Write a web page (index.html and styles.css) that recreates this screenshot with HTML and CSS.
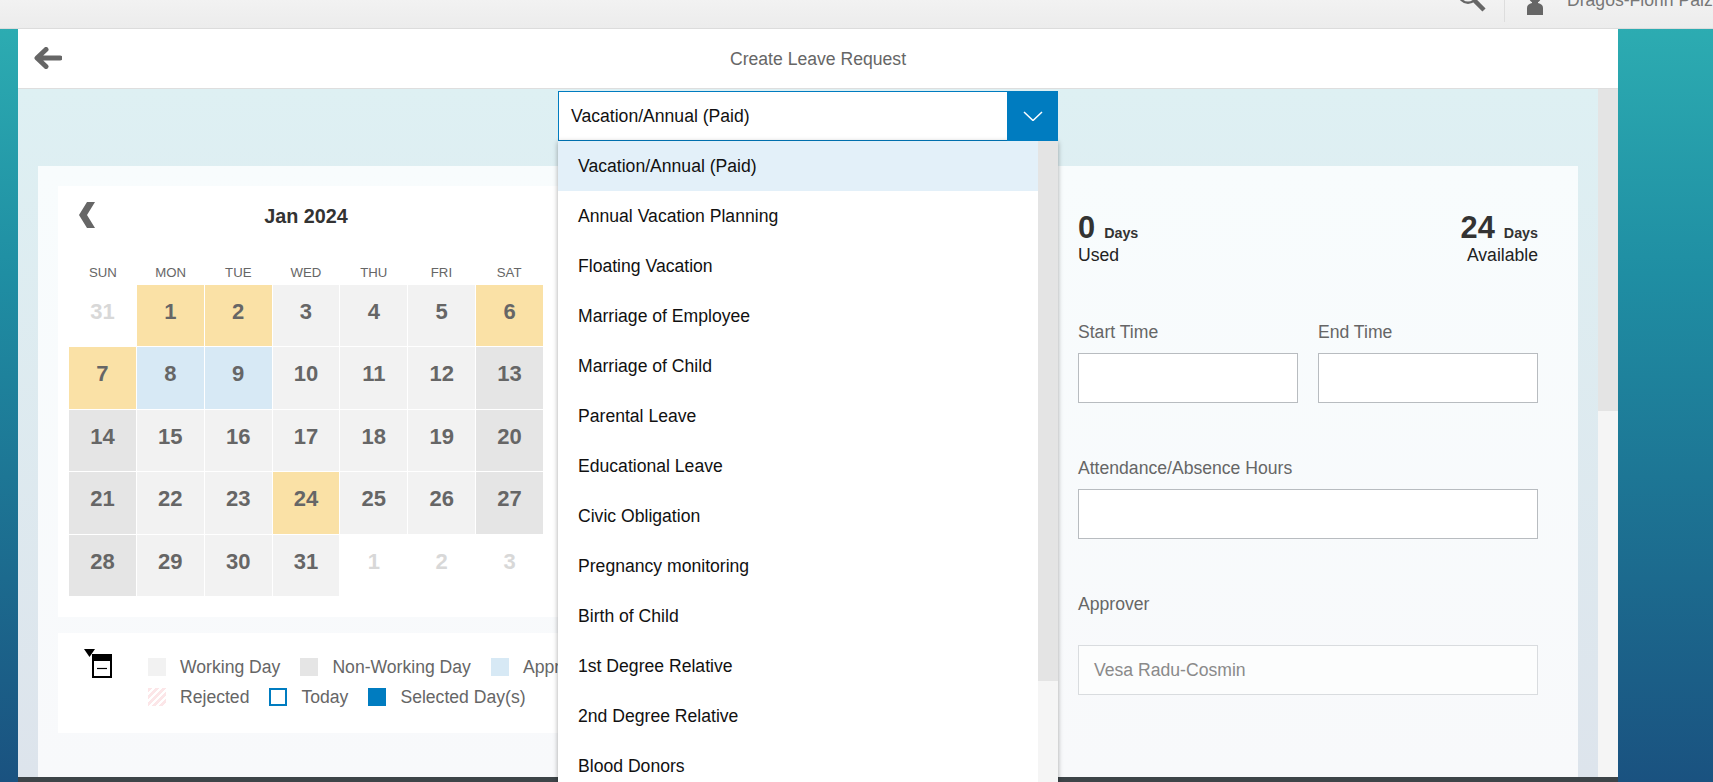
FILE: index.html
```html
<!DOCTYPE html>
<html lang="en">
<head>
    <meta charset="UTF-8">
    <meta name="viewport" content="width=device-width, initial-scale=1.0">
    <title>Create Leave Request</title>
    <link rel="stylesheet" href="styles.css">
</head>
<body>
    <div class="topbar">
        <svg class="search-icon" width="30" height="30" viewBox="0 0 30 30">
            <circle cx="10" cy="10" r="8.8" fill="none" stroke="#666" stroke-width="2.4"/>
            <path d="M16 16 L26 26" stroke="#666" stroke-width="4.5"/>
        </svg>
        <div class="topbar-divider"></div>
        <svg class="user-icon" width="16" height="24" viewBox="0 0 16 24">
            <circle cx="8" cy="6" r="6" fill="#666"/>
            <path d="M5 10 H11 L11 12 C14 13 16 14 16 17 V24 H0 V17 C0 14 2 13 5 12 Z" fill="#666"/>
        </svg>
        <div class="user-name">Dragos-Florin Paiza</div>
    </div>

    <div class="panel">
        <div class="panel-header">
            <svg class="back-icon" width="28" height="22" viewBox="0 0 28 22">
                <path d="M26 11 H4 M12 2.5 L3 11 L12 19.5" fill="none" stroke="#666" stroke-width="5" stroke-linecap="round" stroke-linejoin="round"/>
            </svg>
            <div class="panel-title">Create Leave Request</div>
        </div>

        <div class="panel-body">
            <div class="content">
                <div class="card">
                    <div class="left-col">
                        <div class="calendar">
                            <div class="calendar-head">
                                <svg class="prev-icon" width="17" height="26" viewBox="0 0 17 26">
                                    <path d="M8 0 H16 L8 13 L16 26 H8 L0 13 Z" fill="#666"/>
                                </svg>
                                <div class="month">Jan 2024</div>
                            </div>
                            <div class="weekdays">
                                <div>SUN</div><div>MON</div><div>TUE</div><div>WED</div><div>THU</div><div>FRI</div><div>SAT</div>
                            </div>
                            <div class="days">
                                <div class="day out">31</div>
                                <div class="day leave">1</div>
                                <div class="day leave">2</div>
                                <div class="day">3</div>
                                <div class="day">4</div>
                                <div class="day">5</div>
                                <div class="day leave">6</div>

                                <div class="day leave">7</div>
                                <div class="day approved">8</div>
                                <div class="day approved">9</div>
                                <div class="day">10</div>
                                <div class="day">11</div>
                                <div class="day">12</div>
                                <div class="day off">13</div>

                                <div class="day off">14</div>
                                <div class="day">15</div>
                                <div class="day">16</div>
                                <div class="day">17</div>
                                <div class="day">18</div>
                                <div class="day">19</div>
                                <div class="day off">20</div>

                                <div class="day off">21</div>
                                <div class="day">22</div>
                                <div class="day">23</div>
                                <div class="day leave">24</div>
                                <div class="day">25</div>
                                <div class="day">26</div>
                                <div class="day off">27</div>

                                <div class="day off">28</div>
                                <div class="day">29</div>
                                <div class="day">30</div>
                                <div class="day">31</div>
                                <div class="day out">1</div>
                                <div class="day out">2</div>
                                <div class="day out">3</div>
                            </div>
                        </div>

                        <div class="legend">
                            <svg class="legend-icon" width="30" height="32" viewBox="0 0 30 32">
                                <path d="M0 0 H11 L5.5 8 Z" fill="#000"/>
                                <rect x="9" y="6" width="18" height="22" fill="#fff" stroke="#000" stroke-width="2"/>
                                <rect x="8" y="5" width="20" height="7" fill="#000"/>
                                <path d="M13 19.5 H23" stroke="#000" stroke-width="1.2"/>
                            </svg>
                            <div class="legend-rows">
                                <div class="legend-row">
                                    <div class="legend-item"><span class="swatch working"></span>Working Day</div>
                                    <div class="legend-item"><span class="swatch non-working"></span>Non-Working Day</div>
                                    <div class="legend-item"><span class="swatch appr"></span>Approved</div>
                                </div>
                                <div class="legend-row">
                                    <div class="legend-item"><span class="swatch rejected"></span>Rejected</div>
                                    <div class="legend-item"><span class="swatch today"></span>Today</div>
                                    <div class="legend-item"><span class="swatch selected"></span>Selected Day(s)</div>
                                </div>
                            </div>
                        </div>
                    </div>

                    <div class="right-col">
                        <div class="stats">
                            <div class="stat">
                                <div><span class="stat-num">0</span><span class="stat-unit">Days</span></div>
                                <div class="stat-label">Used</div>
                            </div>
                            <div class="stat stat-right">
                                <div><span class="stat-num">24</span><span class="stat-unit">Days</span></div>
                                <div class="stat-label">Available</div>
                            </div>
                        </div>

                        <div class="time-row">
                            <div class="field">
                                <label class="field-label">Start Time</label>
                                <div class="field-input"></div>
                            </div>
                            <div class="field">
                                <label class="field-label">End Time</label>
                                <div class="field-input"></div>
                            </div>
                        </div>

                        <div class="field hours">
                            <label class="field-label">Attendance/Absence Hours</label>
                            <div class="field-input"></div>
                        </div>

                        <div class="field approver">
                            <label class="field-label">Approver</label>
                            <div class="field-input readonly">Vesa Radu-Cosmin</div>
                        </div>
                    </div>
                </div>
            </div>
            <div class="scrollbar"><div class="scroll-thumb"></div></div>

            <div class="dropdown">
                <div class="select">
                    <div class="select-value">Vacation/Annual (Paid)</div>
                    <div class="select-btn">
                        <svg width="20" height="10" viewBox="0 0 20 10">
                            <path d="M1 1 L10 9.5 L19 1" fill="none" stroke="#fff" stroke-width="1.5"/>
                        </svg>
                    </div>
                </div>
                <div class="options">
                    <div class="option-list">
                        <div class="option active">Vacation/Annual (Paid)</div>
                        <div class="option">Annual Vacation Planning</div>
                        <div class="option">Floating Vacation</div>
                        <div class="option">Marriage of Employee</div>
                        <div class="option">Marriage of Child</div>
                        <div class="option">Parental Leave</div>
                        <div class="option">Educational Leave</div>
                        <div class="option">Civic Obligation</div>
                        <div class="option">Pregnancy monitoring</div>
                        <div class="option">Birth of Child</div>
                        <div class="option">1st Degree Relative</div>
                        <div class="option">2nd Degree Relative</div>
                        <div class="option">Blood Donors</div>
                    </div>
                    <div class="options-scroll"><div class="options-thumb"></div></div>
                </div>
            </div>
        </div>
        <div class="panel-footer"></div>
    </div>
</body>
</html>
```

FILE: styles.css
```css
html, body {
    height: 100%;
}

body {
    margin: 0;
    height: 782px;
    overflow: hidden;
    font-family: "Liberation Sans", Arial, sans-serif;
    font-size: 17.6px;
    background: linear-gradient(to bottom, #2eafb3 0%, #1f8ea3 35%, #1a5280 100%);
}

.topbar {
    height: 28px;
    background: linear-gradient(to bottom, #f2f2f2, #ececec);
    border-bottom: 1px solid #dcdcdc;
    display: flex;
    align-items: flex-end;
    overflow: hidden;
    padding-left: 1458px;
}

.search-icon {
    flex: none;
    margin-bottom: 14px;
}

.topbar-divider {
    flex: none;
    width: 1px;
    height: 40px;
    background: #dddddd;
    margin-left: 16px;
    margin-bottom: 6px;
}

.user-icon {
    flex: none;
    margin-left: 22px;
    margin-bottom: 13px;
}

.user-name {
    flex: none;
    margin-left: 24px;
    margin-bottom: 17px;
    color: #777;
    white-space: nowrap;
}

.panel {
    margin-left: 18px;
    width: 1600px;
    height: 753px;
    display: flex;
    flex-direction: column;
}

.panel-header {
    height: 59px;
    flex: none;
    background: #fff;
    border-bottom: 1px solid #dedede;
    display: flex;
    align-items: center;
    justify-content: center;
    position: relative;
}

.back-icon {
    position: absolute;
    left: 16px;
    top: 18px;
}

.panel-title {
    color: #666;
    padding-top: 1px;
}

.panel-body {
    flex: 1;
    min-height: 0;
    display: flex;
    position: relative;
}

.content {
    flex: 1;
    padding: 77px 20px 0;
    background: linear-gradient(to bottom, #def0f3, #dde4ec);
}

.card {
    height: 100%;
    box-sizing: border-box;
    padding: 20px 40px 0 20px;
    background: linear-gradient(to bottom, #f8fcfd, #f8f9fb);
    display: flex;
    gap: 20px;
}

.scrollbar {
    width: 20px;
    flex: none;
    background: #f5f5f5;
}

.scroll-thumb {
    height: 322px;
    background: #e4e4e4;
}

.panel-footer {
    height: 5px;
    flex: none;
    background: #3d4448;
}

/* calendar */
.left-col {
    width: 1000px;
    flex: none;
}

.calendar {
    height: 431px;
    box-sizing: border-box;
    background: #fff;
    padding: 0 11px;
}

.calendar-head {
    width: 474px;
    height: 60px;
    display: flex;
    align-items: center;
    justify-content: center;
    position: relative;
}

.prev-icon {
    position: absolute;
    left: 10px;
    top: 16px;
}

.month {
    font-size: 19.8px;
    font-weight: bold;
    color: #333;
}

.weekdays {
    width: 474px;
    display: grid;
    grid-template-columns: repeat(7, 1fr);
    height: 26px;
    padding-top: 13px;
    align-items: center;
    text-align: center;
    font-size: 13.2px;
    color: #666;
}

.days {
    width: 474px;
    display: grid;
    grid-template-columns: repeat(7, 1fr);
    grid-auto-rows: 61.3px;
    gap: 1.2px 1px;
}

.day {
    display: flex;
    align-items: center;
    justify-content: center;
    box-sizing: border-box;
    padding-bottom: 8px;
    font-size: 22px;
    font-weight: bold;
    color: #666;
    background: #f2f2f2;
}

.day.leave {
    background: #fae1a6;
}

.day.approved {
    background: #d7e9f5;
}

.day.off {
    background: #e5e5e5;
}

.day.out {
    background: none;
    color: #d8d8d8;
}

/* legend */
.legend {
    margin-top: 16px;
    height: 100px;
    background: #fff;
    position: relative;
    padding: 25px 0 0 90px;
    box-sizing: border-box;
}

.legend-icon {
    position: absolute;
    left: 26px;
    top: 16px;
}

.legend-rows {
    display: flex;
    flex-direction: column;
    gap: 12px;
}

.legend-row {
    display: flex;
    gap: 20px;
    height: 18px;
}

.legend-item {
    display: flex;
    align-items: center;
    gap: 14px;
    color: #666;
    white-space: nowrap;
}

.swatch {
    width: 18px;
    height: 18px;
    box-sizing: border-box;
    flex: none;
}

.swatch.working {
    background: #f2f2f2;
}

.swatch.non-working {
    background: #e5e5e5;
}

.swatch.appr {
    background: #d7e9f5;
}

.swatch.rejected {
    background: repeating-linear-gradient(135deg, #fce6e8 0, #fce6e8 3px, #fff 3px, #fff 5px);
}

.swatch.today {
    border: 2px solid #007cc0;
    background: #fff;
}

.swatch.selected {
    background: #007cc0;
}

/* right side */
.right-col {
    flex: 1;
    min-width: 0;
}

.stats {
    display: flex;
    justify-content: space-between;
    padding-top: 25px;
}

.stat-right {
    text-align: right;
}

.stat-num {
    font-size: 30.8px;
    font-weight: bold;
    color: #333;
    line-height: 34px;
}

.stat-unit {
    font-size: 14.3px;
    font-weight: bold;
    color: #333;
    margin-left: 9px;
}

.stat-label {
    line-height: 21px;
    color: #222;
}

.time-row {
    display: flex;
    gap: 20px;
    margin-top: 56px;
}

.time-row .field {
    flex: 1;
}

.field-label {
    display: block;
    height: 20px;
    line-height: 20px;
    margin-bottom: 11px;
    color: #666;
}

.field-input {
    height: 50px;
    box-sizing: border-box;
    border: 1px solid #b8bcc0;
    background: #fff;
}

.field.hours {
    margin-top: 55px;
}

.field.approver {
    margin-top: 55px;
}

.field.approver .field-label {
    margin-bottom: 31px;
}

.field-input.readonly {
    border-color: #d9dcdf;
    background: #fcfdfd;
    color: #8a8a8a;
    padding-left: 15px;
    line-height: 48px;
}

/* dropdown over the form */
.dropdown {
    position: absolute;
    left: 540px;
    top: 2px;
    width: 500px;
}

.select {
    height: 50px;
    box-sizing: border-box;
    display: flex;
    border: 1px solid #007cc0;
    background: #fff;
}

.select-value {
    flex: 1;
    padding-left: 12px;
    line-height: 48px;
    color: #111;
}

.select-btn {
    width: 51px;
    margin: -1px;
    background: #007cc0;
    display: flex;
    align-items: center;
    justify-content: center;
}

.options {
    height: 641px;
    display: flex;
    overflow: hidden;
    background: #fff;
    box-shadow: 0 1px 5px rgba(0, 0, 0, 0.35);
}

.option-list {
    flex: 1;
}

.option {
    height: 50px;
    line-height: 50px;
    padding-left: 20px;
    color: #111;
}

.option.active {
    background: #e3f0f9;
}

.options-scroll {
    width: 20px;
    flex: none;
    background: #f5f5f5;
}

.options-thumb {
    height: 540px;
    background: #e4e4e4;
}
```
